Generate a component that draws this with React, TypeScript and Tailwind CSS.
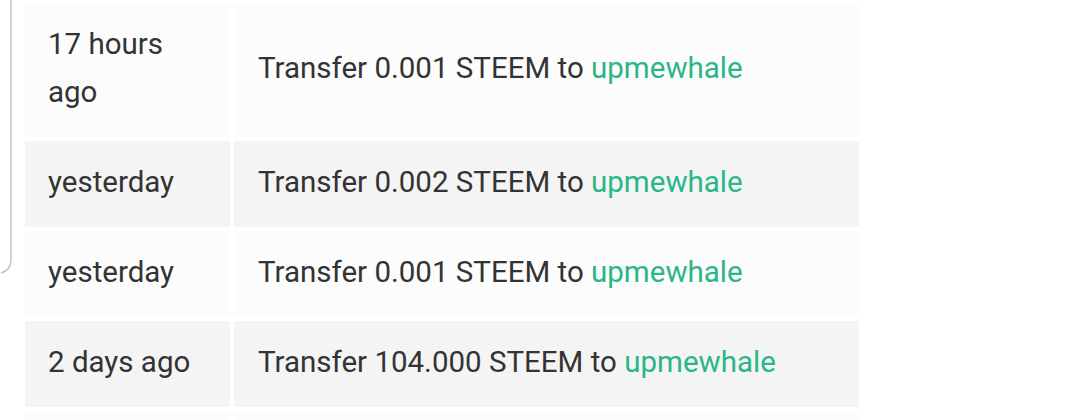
import React from "react";

type Row = { when: string; amount: string; to: string };

const rows: Row[] = [
  { when: "17 hours ago", amount: "0.001", to: "upmewhale" },
  { when: "yesterday", amount: "0.002", to: "upmewhale" },
  { when: "yesterday", amount: "0.001", to: "upmewhale" },
  { when: "2 days ago", amount: "104.000", to: "upmewhale" },
];

export default function App() {
  return (
    <div
      className="relative h-[420px] w-[1079px] overflow-hidden bg-white"
      style={{ fontFamily: "Roboto, 'Liberation Sans', sans-serif" }}
    >
      {/* side rail of the card behind */}
      <svg className="absolute left-0 top-0" width="20" height="280" viewBox="0 0 20 280">
        <path d="M11 0 V260 Q11 270 1 273" fill="none" stroke="#c4c4c4" strokeWidth="1.5" />
      </svg>

      <div className="pl-[25px] pt-[3px]">
        <div className="grid grid-cols-[205px_625px] gap-[4px] text-[29.5px] leading-[48px] text-[#333333]">
          {rows.map((r, i) => {
            const bg = i % 2 === 0 ? "bg-[#fcfcfc]" : "bg-[#f4f4f4]";
            return (
              <React.Fragment key={i}>
                <div className={`${bg} flex items-center px-[23px] pt-[17px] pb-[21px]`}>{r.when}</div>
                <div className={`${bg} flex items-center px-[24px] pt-[17px] pb-[21px]`}>
                  <span>
                    Transfer {r.amount} STEEM to{" "}
                    <span className="text-[#2bb58b]">{r.to}</span>
                  </span>
                </div>
              </React.Fragment>
            );
          })}
          {/* next row, below the fold */}
          <div className="h-[86px] bg-[#fcfcfc]" />
          <div className="h-[86px] bg-[#fcfcfc]" />
        </div>
      </div>
    </div>
  );
}
